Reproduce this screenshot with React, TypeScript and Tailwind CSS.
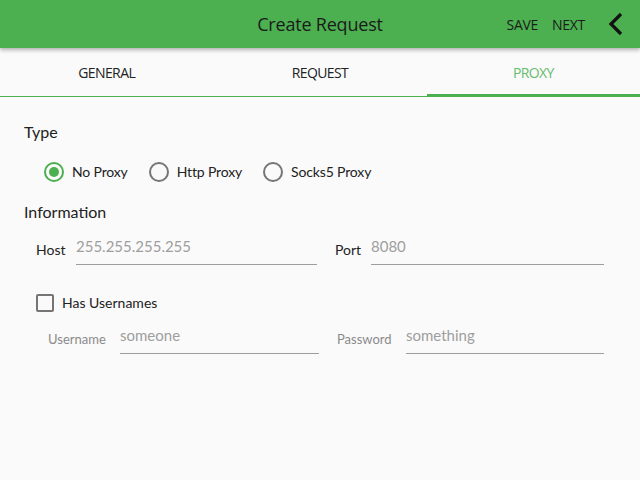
import React from "react";

const Radio = ({ checked, label }: { checked?: boolean; label: string }) => (
  <div className="flex items-center">
    <div
      className={`w-[20px] h-[20px] rounded-full border-2 flex items-center justify-center ${
        checked ? "border-[#4caf50]" : "border-[#757575]"
      }`}
    >
      {checked && <div className="w-[10px] h-[10px] rounded-full bg-[#4caf50]" />}
    </div>
    <span className="ml-[8px] text-[14px] tracking-[-0.15px] text-[#222]">{label}</span>
  </div>
);

const Field = ({
  label,
  value,
  labelClass,
  lw,
  iw,
}: {
  label: string;
  value: string;
  labelClass: string;
  lw: string;
  iw: string;
}) => (
  <div className="flex items-end">
    <div className={`${lw} ${labelClass}`}>{label}</div>
    <div className={`${iw} border-b border-[#9e9e9e] pb-[9px] text-[15px] leading-[18px] text-[#9e9e9e]`}>
      {value}
    </div>
  </div>
);

export default function App() {
  return (
    <div
      className="w-[640px] h-[480px] bg-[#fafafa] overflow-hidden"
      style={{ fontFamily: "Lato, 'Noto Sans', sans-serif" }}
    >
      <div
        className="h-[48px] bg-[#4caf50] relative flex items-center justify-center shadow-[0_2px_4px_rgba(0,0,0,0.3)] z-10"
        style={{ fontFamily: "'Open Sans', sans-serif" }}
      >
        <div className="text-[18px] text-[#1b1b1b] tracking-[-0.2px]">Create Request</div>
        <div className="absolute right-0 top-0 h-[48px] flex items-center text-[14px] tracking-[-0.3px] text-[#1b1b1b]">
          <span className="mr-[14px]">SAVE</span>
          <span className="mr-[23px]">NEXT</span>
          <svg width="16" height="24" viewBox="0 0 16 24" className="mr-[16px]">
            <path d="M13 2 L3 12 L13 22" fill="none" stroke="#111" strokeWidth="3.2" />
          </svg>
        </div>
      </div>
      <div className="relative h-[49px] flex" style={{ fontFamily: "'Open Sans', sans-serif" }}>
        <div className="flex-1 flex items-center justify-center text-[14px] text-[#222] tracking-[-0.6px]">GENERAL</div>
        <div className="flex-1 flex items-center justify-center text-[14px] text-[#222] tracking-[-0.6px]">REQUEST</div>
        <div className="flex-1 flex items-center justify-center text-[14px] text-[#66bb6a] tracking-[-0.6px]">PROXY</div>
        <div className="absolute left-0 right-0 bottom-0 h-[1px] bg-[#4caf50]" />
        <div className="absolute right-0 bottom-0 w-[213px] h-[3px] bg-[#4caf50]" />
      </div>
      <div className="px-[24px] pt-[25px]">
        <div className="text-[16px] text-[#222] leading-[20px]">Type</div>
        <div className="flex gap-[21px] ml-[20px] mt-[19px]">
          <Radio checked label="No Proxy" />
          <Radio label="Http Proxy" />
          <Radio label="Socks5 Proxy" />
        </div>
        <div className="text-[16px] text-[#222] leading-[20px] mt-[20px]">Information</div>
        <div className="flex mt-[15px] ml-[12px]">
          <Field label="Host" value="255.255.255.255" labelClass="text-[14px] text-[#222] pb-[5px]" lw="w-[40px]" iw="w-[241px]" />
          <div className="w-[18px]" />
          <Field label="Port" value="8080" labelClass="text-[14px] text-[#222] pb-[5px]" lw="w-[36px]" iw="w-[233px]" />
        </div>
        <div className="flex items-center mt-[27px] ml-[12px]">
          <div className="w-[18px] h-[18px] border-2 border-[#757575] rounded-[2px]" />
          <span className="ml-[8px] text-[14px] text-[#222]">Has Usernames</span>
        </div>
        <div className="flex mt-[13px] ml-[24px]">
          <Field label="Username" value="someone" labelClass="text-[13px] text-[#8a8a8a] pb-[5px]" lw="w-[72px]" iw="w-[199px]" />
          <div className="w-[18px]" />
          <Field label="Password" value="something" labelClass="text-[13px] text-[#8a8a8a] pb-[5px]" lw="w-[69px]" iw="w-[198px]" />
        </div>
      </div>
    </div>
  );
}
